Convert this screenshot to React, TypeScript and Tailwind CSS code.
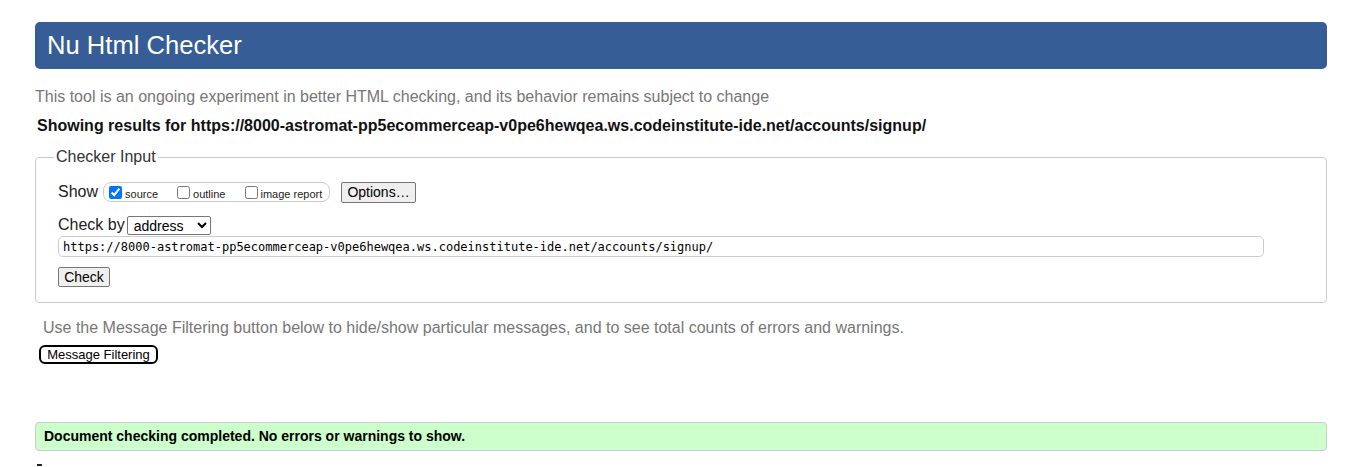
import React from 'react';

const url =
  'https://8000-astromat-pp5ecommerceap-v0pe6hewqea.ws.codeinstitute-ide.net/accounts/signup/';

export default function App() {
  return (
    <div className="min-h-screen bg-white pl-[35px] pr-[31px] font-['Liberation_Sans',Arial,sans-serif] text-[#222]">
      {/* Header */}
      <div className="mt-[22px] flex h-[47px] items-center rounded-[5px] bg-[#365d95] px-[12px]">
        <h1 className="text-[25.6px] leading-none text-white">Nu Html Checker</h1>
      </div>

      <p className="mt-[19px] text-[16px] leading-[18px] text-[#777]">
        This tool is an ongoing experiment in better HTML checking, and its behavior remains subject to change
      </p>

      <p className="ml-[2px] mt-[11px] text-[16px] font-bold leading-[18px] text-[#111]">
        Showing results for {url}
      </p>

      {/* Checker Input */}
      <fieldset className="mt-[13px] rounded-[4px] border border-[#ccc] pb-[15px] pl-[22px] pt-[15px]">
        <legend className="ml-[-4px] px-[2px] text-[16px] leading-[18px] text-[#333]">Checker Input</legend>

        <div className="flex h-[22px] items-center">
          <span className="text-[16px] text-[#222]">Show</span>
          <div className="ml-[5px] flex h-[20px] w-[227px] items-center rounded-[8px] border border-[#ccc] pl-[5px] text-[11px] text-[#222]">
            <label className="flex items-center">
              <input type="checkbox" defaultChecked className="m-0 h-[13px] w-[13px] accent-[#0075ff]" />
              <span className="ml-[3px] translate-y-[2px]">source</span>
            </label>
            <label className="ml-[19px] flex items-center">
              <input type="checkbox" className="m-0 h-[13px] w-[13px]" />
              <span className="ml-[3px] translate-y-[2px]">outline</span>
            </label>
            <label className="ml-[20px] flex items-center">
              <input type="checkbox" className="m-0 h-[13px] w-[13px]" />
              <span className="ml-[2px] translate-y-[2px]">image report</span>
            </label>
          </div>
          <button className="ml-[11px] h-[21px] w-[75px] rounded-[2px] border border-[#767676] bg-[#efefef] text-[14px] leading-none text-black">
            Options…
          </button>
        </div>

        <div className="mt-[12px] flex h-[20px] items-center">
          <span className="text-[16px] text-[#222]">Check by</span>
          <select
            defaultValue="address"
            className="ml-[2px] h-[19px] w-[84px] rounded-[2px] border border-[#767676] bg-white pl-[2px] text-[14px] leading-none text-black"
          >
            <option value="address">address</option>
            <option value="file">file upload</option>
            <option value="text">text input</option>
          </select>
        </div>

        <input
          readOnly
          value={url}
          className="mt-[1px] block h-[21px] w-[1206px] rounded-[5px] border border-[#ccc] bg-white px-[4px] font-['DejaVu_Sans_Mono',monospace] text-[12px] text-black outline-none"
        />

        <button className="mt-[10px] block h-[20px] w-[52px] rounded-[2px] border border-[#767676] bg-[#efefef] text-[14px] leading-none text-black">
          Check
        </button>
      </fieldset>

      <p className="ml-[8px] mt-[16px] text-[16px] leading-[18px] text-[#777]">
        Use the Message Filtering button below to hide/show particular messages, and to see total counts of errors and warnings.
      </p>

      <button className="ml-[4px] mt-[8px] block h-[19px] w-[119px] rounded-[6px] border-2 border-black bg-white text-[13px] leading-none text-black">
        Message Filtering
      </button>

      <div className="mt-[58px] flex h-[29px] items-center rounded-[4px] border border-[#ccc] bg-[#ccffcc] pl-[8px]">
        <span className="text-[14px] font-bold text-black">Document checking completed. No errors or warnings to show.</span>
      </div>

      <div className="ml-[2px] mt-[13px] h-[2px] w-[5px] bg-[#222]" />
    </div>
  );
}
